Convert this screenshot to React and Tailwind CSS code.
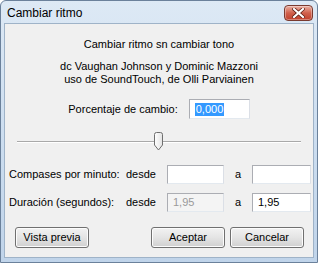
import React from 'react'

const font = { fontFamily: '"Liberation Sans", Arial, sans-serif' }

function SliderThumb() {
  return (
    <svg width="11" height="19" viewBox="0 0 11 19" className="block">
      <defs>
        <linearGradient id="thumbFill" x1="0" y1="0" x2="1" y2="0">
          <stop offset="0" stopColor="#ffffff" />
          <stop offset="1" stopColor="#e3e3e3" />
        </linearGradient>
      </defs>
      <path
        d="M1.5 2.5 Q1.5 0.5 3.5 0.5 H7.5 Q9.5 0.5 9.5 2.5 V13 L5.5 18 L1.5 13 Z"
        fill="url(#thumbFill)"
        stroke="#6f6f6f"
        strokeWidth="1"
      />
    </svg>
  )
}

function CloseButton() {
  return (
    <div className="w-[29px] h-[16px] rounded-[4px] border border-[#7a3a2f] bg-gradient-to-b from-[#eab0a2] via-[#d0604c] to-[#c0402c] flex items-center justify-center shadow-[inset_0_0_0_1px_rgba(255,255,255,0.35)]">
      <svg width="13" height="10" viewBox="0 0 13 10">
        <path d="M2 1 L11 9 M11 1 L2 9" stroke="#5a1a10" strokeWidth="3.6" strokeLinecap="square" />
        <path d="M2 1 L11 9 M11 1 L2 9" stroke="#ffffff" strokeWidth="2.2" strokeLinecap="square" />
      </svg>
    </div>
  )
}

function Boton({ children }) {
  return (
    <div className="w-[74px] h-[21px] rounded-[3px] border border-[#707070] bg-gradient-to-b from-[#f2f2f2] via-[#e4e4e4] to-[#d0d0d0] flex items-center justify-center text-[11px] text-black shadow-[inset_0_0_0_1px_#fcfcfc]">
      {children}
    </div>
  )
}

function Campo({ value, disabled, width = 'w-[58px]' }) {
  return (
    <div
      className={`${width} h-[19px] border border-[#abadb3] border-b-[#e3e9ef] border-r-[#dbdfe6] flex items-center pl-[5px] text-[11px] ${
        disabled ? 'bg-[#f4f4f4] text-[#9a9a9a]' : 'bg-white text-black'
      }`}
    >
      {value}
    </div>
  )
}

export default function App() {
  return (
    <div className="w-[318px] h-[263px] bg-white" style={font}>
      <div className="w-[318px] h-[263px] rounded-t-[6px] border border-[#6b819b] bg-gradient-to-b from-[#dde9f5] via-[#cddef0] to-[#c0d4ea] flex flex-col">
        {/* Barra de titulo */}
        <div className="h-[22px] flex items-center justify-between pl-[6px] pr-[4px] pt-[1px] shrink-0">
          <span className="text-[12px] text-black">Cambiar ritmo</span>
          <CloseButton />
        </div>

        {/* Area cliente */}
        <div className="flex-1 mx-[3px] mb-[4px] border border-[#9fb3c8] bg-[#f0f0f0] flex flex-col text-[11px] text-black">
          <div className="mt-[14px] h-[13px] leading-[13px] text-center">Cambiar ritmo sn cambiar tono</div>

          <div className="mt-[9px] h-[13px] leading-[13px] text-center">dc Vaughan Johnson y Dominic Mazzoni</div>
          <div className="h-[13px] leading-[13px] text-center">uso de SoundTouch, de Olli Parviainen</div>

          <div className="mt-[13px] h-[20px] flex items-center justify-center gap-[11px]">
            <span>Porcentaje de cambio:</span>
            <div className="w-[61px] h-[20px] bg-white border border-[#abadb3] border-b-[#e3e9ef] border-r-[#dbdfe6] flex items-center pl-[5px]">
              <span className="bg-[#3399ff] text-white leading-[13px] px-[1px]">0,000</span>
            </div>
          </div>

          {/* Deslizador */}
          <div className="mt-[13px] h-[20px] mx-[12px] relative flex items-center">
            <div className="w-full h-[2px] border-t border-[#a9a9a9] border-b border-b-white" />
            <div className="absolute left-[136px] top-0">
              <SliderThumb />
            </div>
          </div>

          <div className="mt-[12px] grid grid-cols-[117px_41px_57px_28px_59px] items-center h-[20px] pl-[4px]">
            <span>Compases por minuto:</span>
            <span>desde</span>
            <Campo value="" width="w-[57px]" />
            <span className="pl-[11px]">a</span>
            <Campo value="" width="w-[59px]" />
          </div>

          <div className="mt-[9px] grid grid-cols-[117px_41px_57px_28px_59px] items-center h-[19px] pl-[4px]">
            <span>Duración (segundos):</span>
            <span>desde</span>
            <Campo value="1,95" disabled width="w-[57px]" />
            <span className="pl-[11px]">a</span>
            <Campo value="1,95" width="w-[59px]" />
          </div>

          <div className="mt-[15px] flex items-center pl-[10px] pr-[9px]">
            <Boton>Vista previa</Boton>
            <div className="flex-1" />
            <Boton>Aceptar</Boton>
            <div className="w-[5px]" />
            <Boton>Cancelar</Boton>
          </div>
        </div>
      </div>
    </div>
  )
}
